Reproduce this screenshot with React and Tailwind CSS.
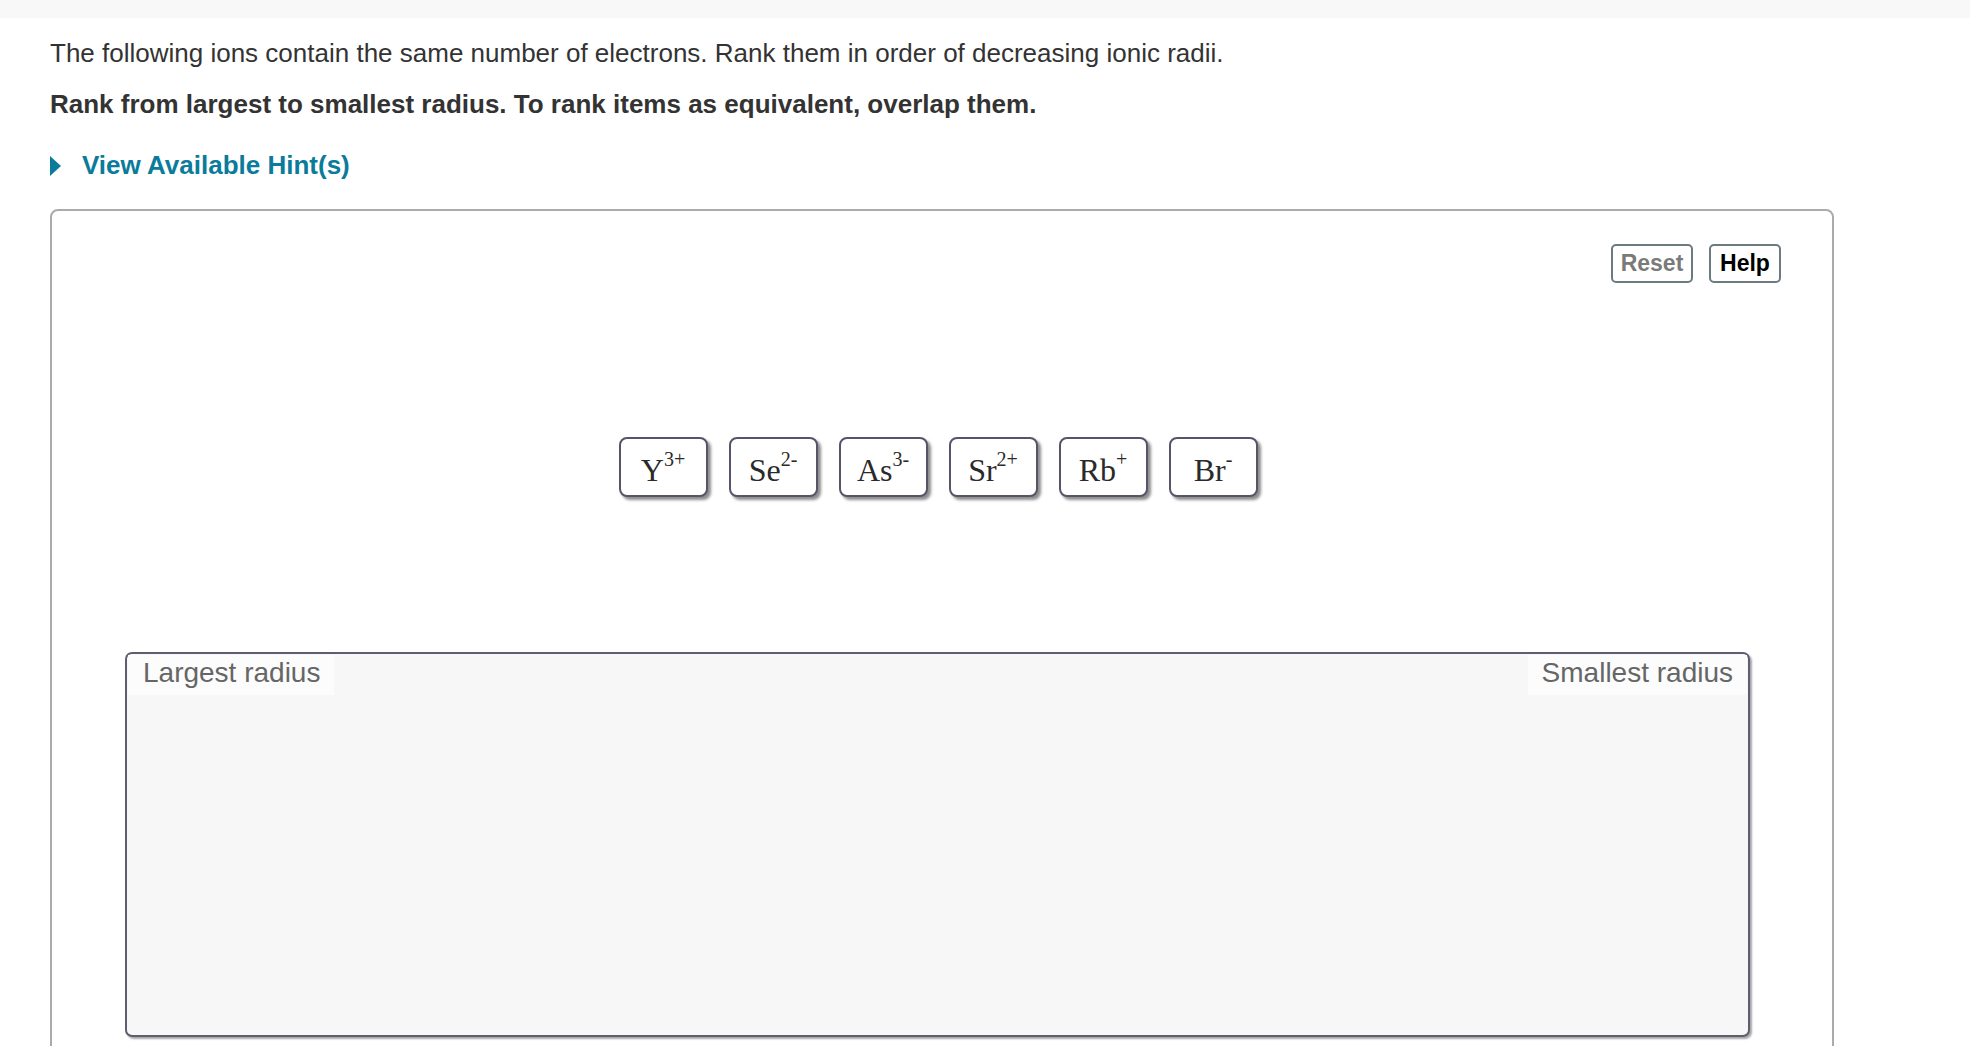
import React from 'react';

// ions in the order they sit in the tray
const IONS = [
  { sym: 'Y', charge: '3+' },
  { sym: 'Se', charge: '2-' },
  { sym: 'As', charge: '3-' },
  { sym: 'Sr', charge: '2+' },
  { sym: 'Rb', charge: '+' },
  { sym: 'Br', charge: '-' },
];

function IonTile({ sym, charge }) {
  return (
    <div className="w-[89px] h-[60px] bg-white border-2 border-[#55556a] rounded-[8px] shadow-[3px_3px_3px_rgba(0,0,0,0.45)] flex items-center justify-center font-['Liberation_Serif',serif] text-[#2a2a2a] text-[32px] leading-none">
      <span className="mt-[6px]">
        {sym}
        <sup className="text-[20px] top-[-0.75em]">{charge}</sup>
      </span>
    </div>
  );
}

export default function App() {
  return (
    <div className="min-h-screen bg-white font-['Liberation_Sans',Arial,sans-serif] text-[#333]">
      <div className="h-[18px] bg-[#f8f8f8]" />

      <div className="pl-[50px]">
        <p className="mt-[21px] text-[26px] leading-[29px]">
          The following ions contain the same number of electrons. Rank them in order of decreasing ionic radii.
        </p>
        <p className="mt-[22px] text-[26px] leading-[29px] font-bold">
          Rank from largest to smallest radius. To rank items as equivalent, overlap them.
        </p>

        {/* hint toggle */}
        <div className="mt-[32px] flex items-center h-[29px] text-[#0b7b9b]">
          <svg width="11" height="20" viewBox="0 0 11 20" className="shrink-0">
            <path d="M0 0 L11 10 L0 20 Z" fill="#0b7b9b" />
          </svg>
          <span className="ml-[21px] text-[26px] font-bold leading-[29px]">View Available Hint(s)</span>
        </div>

        {/* ranking widget */}
        <div className="mt-[29px] w-[1784px] h-[900px] border-2 border-[#ababab] rounded-[8px] bg-white">
          <div className="flex justify-end gap-[16px] pt-[33px] pr-[51px]">
            <button className="w-[82px] h-[39px] border-2 border-[#6b7b80] rounded-[5px] text-[23px] font-bold text-[#7a7a7a] leading-none">
              Reset
            </button>
            <button className="w-[72px] h-[39px] border-2 border-[#6b7b80] rounded-[5px] text-[23px] font-bold text-black leading-none">
              Help
            </button>
          </div>

          <div className="mt-[154px] flex justify-center gap-[21px] pr-[8px]">
            {IONS.map((ion) => (
              <IonTile key={ion.sym} {...ion} />
            ))}
          </div>

          <div className="mt-[155px] ml-[73px] w-[1625px] h-[385px] border-2 border-[#5e5e70] rounded-[7px] bg-[#f7f7f7] shadow-[2px_2px_2px_rgba(0,0,0,0.35)] flex justify-between items-start">
            <div className="ml-px mt-px h-[40px] bg-[#fcfcfc] pl-[15px] pr-[14px] text-[28px] leading-[35px] text-[#666]">
              Largest radius
            </div>
            <div className="mr-px mt-px h-[40px] bg-[#fcfcfc] pl-[14px] pr-[14px] text-[28px] leading-[35px] text-[#666]">
              Smallest radius
            </div>
          </div>
        </div>
      </div>
    </div>
  );
}
